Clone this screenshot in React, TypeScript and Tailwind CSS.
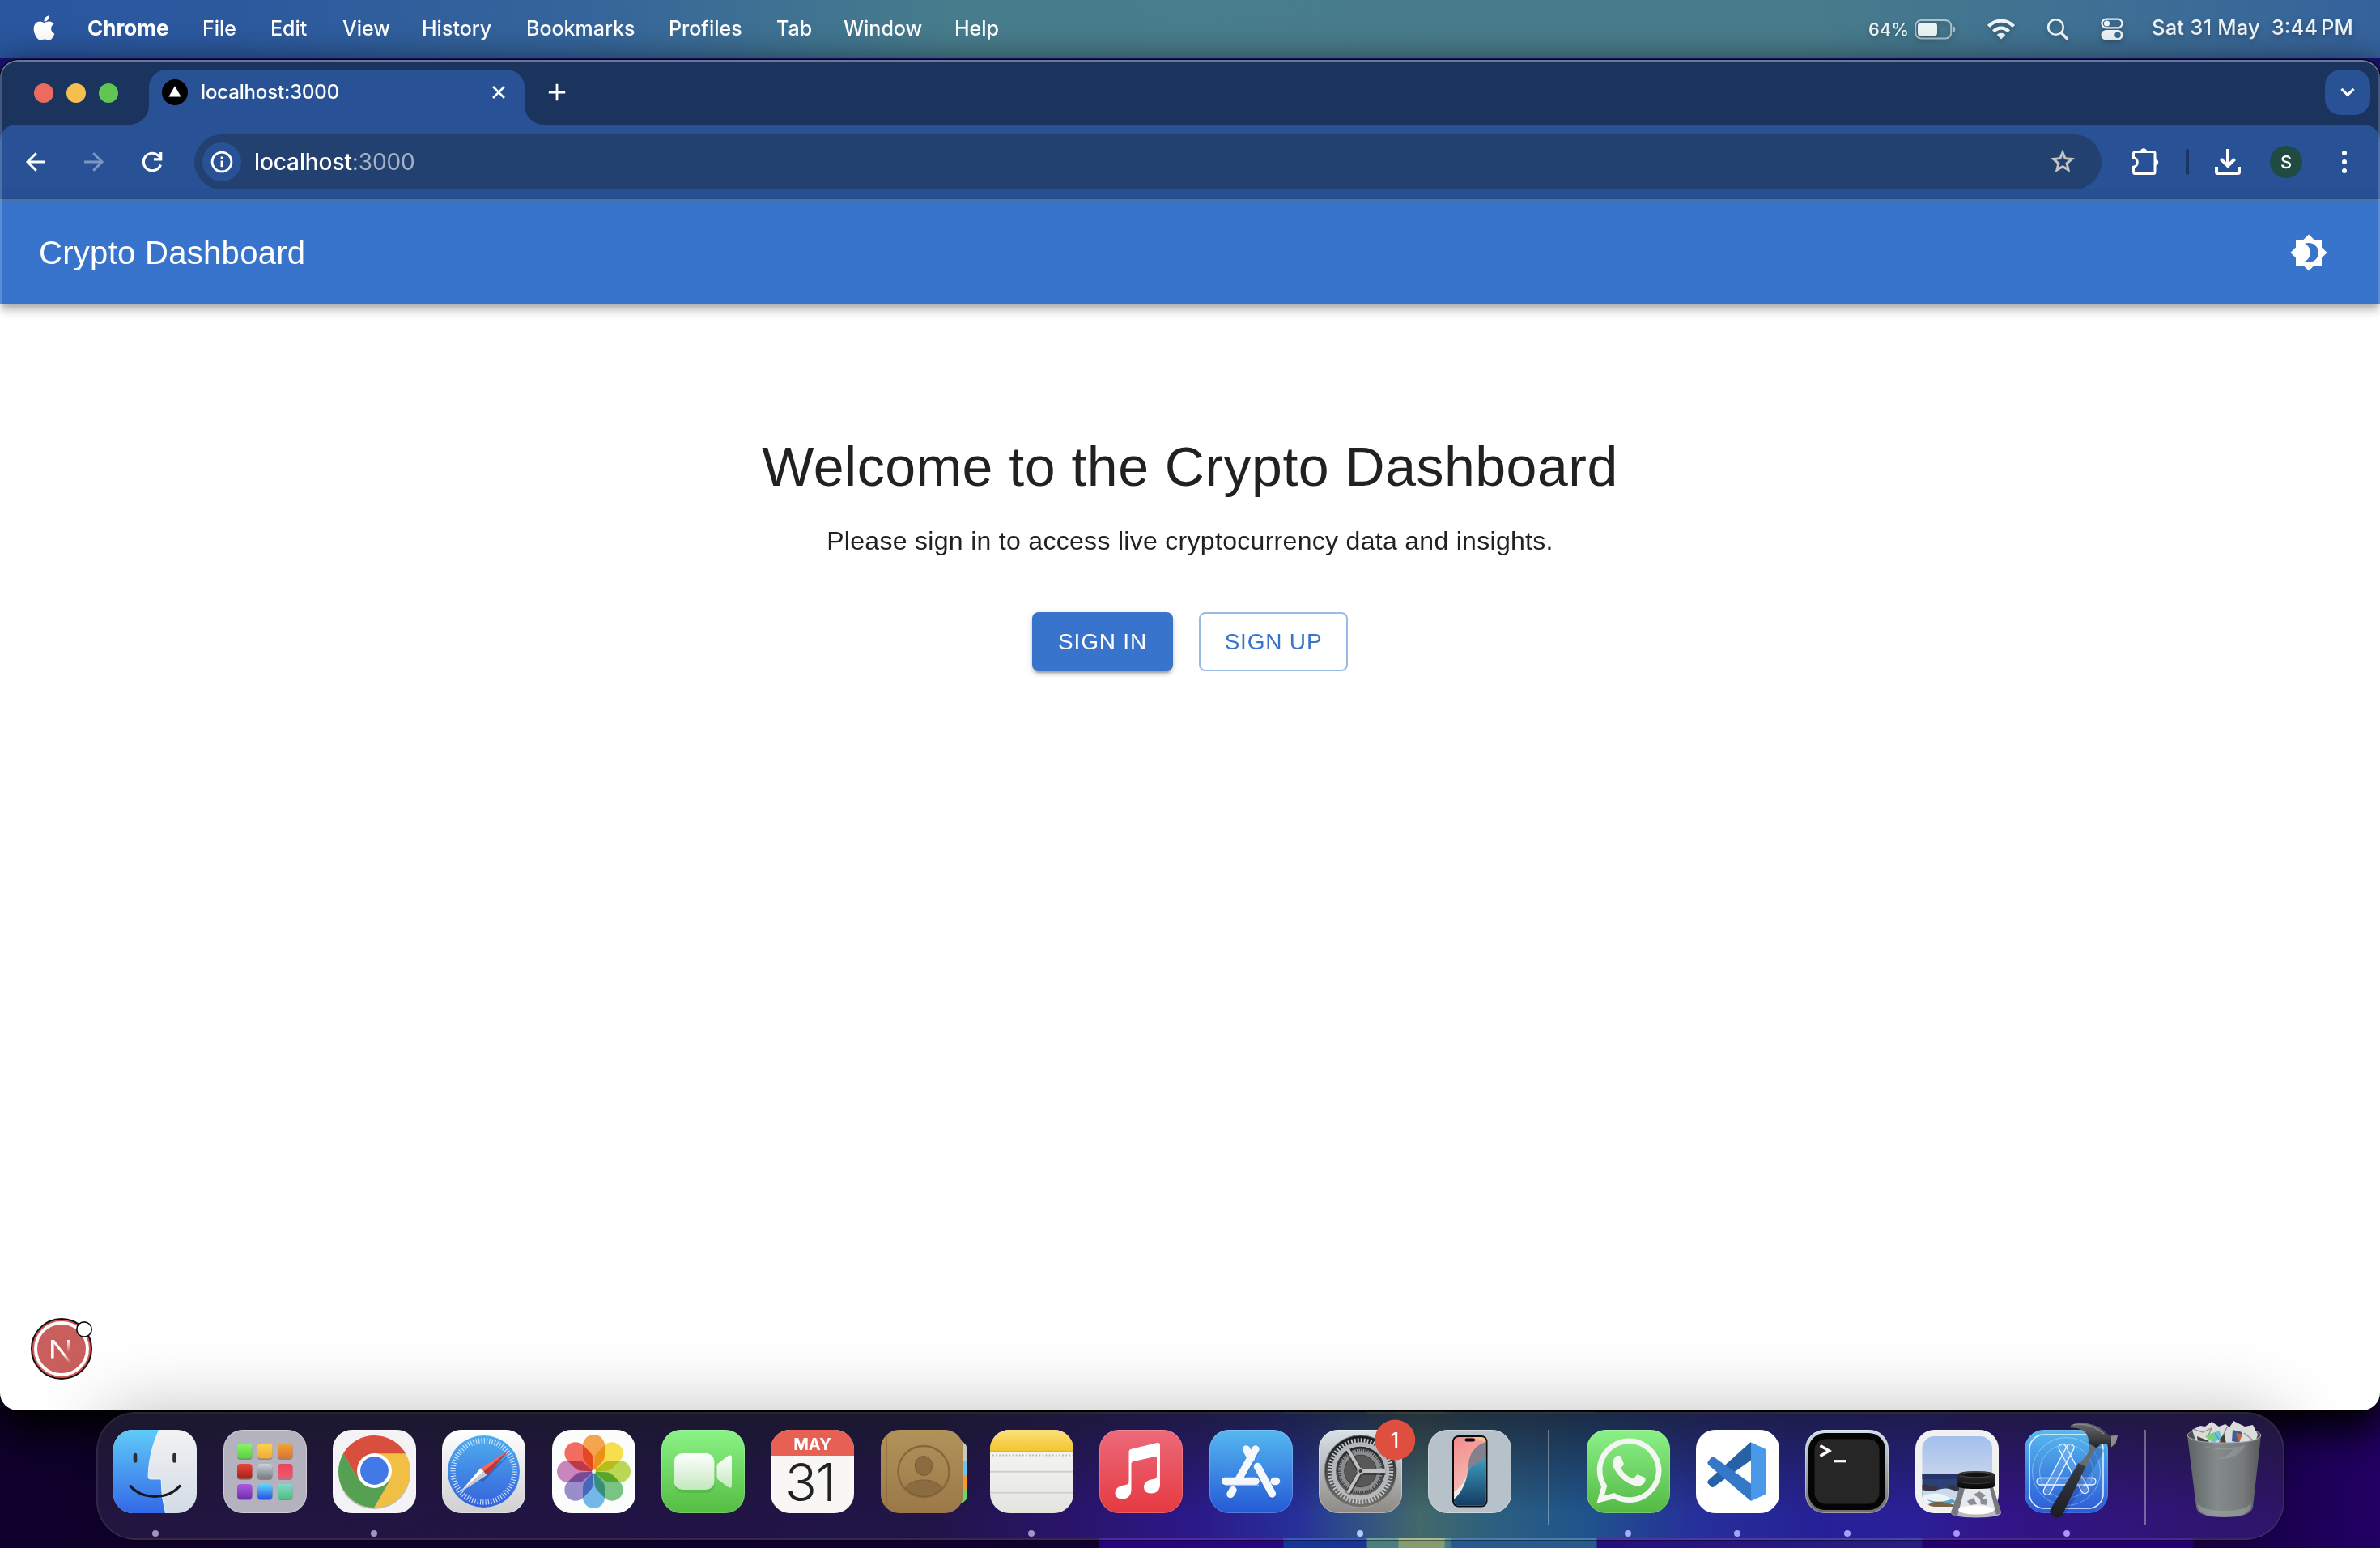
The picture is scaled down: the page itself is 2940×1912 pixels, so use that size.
import React from "react";
import { FaApple, FaWhatsapp } from "react-icons/fa";
import { MdBrightness4 } from "react-icons/md";

const menuItems = [
  { label: "Chrome", cls: "w-[142px] font-bold text-[26px]" },
  { label: "File", cls: "w-[84px]" },
  { label: "Edit", cls: "w-[89px]" },
  { label: "View", cls: "w-[98px]" },
  { label: "History", cls: "w-[129px]" },
  { label: "Bookmarks", cls: "w-[176px]" },
  { label: "Profiles", cls: "w-[133px]" },
  { label: "Tab", cls: "w-[83px]" },
  { label: "Window", cls: "w-[137px]" },
  { label: "Help", cls: "w-[80px]" },
];

function MenuBar() {
  return (
    <header className="flex h-[72px] shrink-0 items-center bg-[linear-gradient(90deg,#2a569f_0%,#2c599e_10%,#35659a_25%,#3f7292_33%,#477c8c_40%,#487d8b_50%,#487c8b_76%,#3f7094_88%,#35629c_100%)] text-[25px] font-medium text-white">
      <div className="flex w-[108px] pl-[37px]">
        <FaApple className="mt-[-4px] size-[35px]" />
      </div>
      <nav className="flex items-baseline pb-[2px]">
        {menuItems.map((m) => (
          <span key={m.label} className={"block whitespace-nowrap leading-[38px] " + m.cls}>
            {m.label}
          </span>
        ))}
      </nav>
      <div className="ml-auto flex items-center text-[#eef3f6] drop-shadow-[0_3px_3px_rgba(0,0,0,0.25)]">
        <span className="block w-[57px] whitespace-nowrap text-[22px] tracking-[0px]">64%</span>
        <svg width="54" height="26" viewBox="0 0 54 26" className="block">
          <rect x="1.2" y="2" width="44" height="22.5" rx="7" fill="none" stroke="#a9c2cb" strokeWidth="2" />
          <rect x="4" y="5" width="24" height="16.5" rx="4" fill="#eef3f6" />
          <path d="M48 9.5c3 .6 3 6.900 0 7.500z" fill="#a9c2cb" />
        </svg>
        <svg width="36" height="28" viewBox="0 0 36 28" className="ml-[35px] block" fill="none" stroke="#eef3f6" strokeWidth="4.300">
          <path d="M2.500 10.500C11 1.200 25 1.200 33.500 10.500" />
          <path d="M8.500 16.800C14 11.200 22 11.200 27.500 16.800" />
          <path d="M18 26.500l-5.300-5.600c3-2.900 7.600-2.900 10.600 0z" fill="#eef3f6" stroke="none" />
        </svg>
        <svg width="28" height="28" viewBox="0 0 28 28" className="ml-[38px] block" fill="none" stroke="#eef3f6" strokeLinecap="round">
          <circle cx="11.500" cy="11.500" r="9.300" strokeWidth="2.600" />
          <path d="M18.500 18.800l6.800 7" strokeWidth="3.400" />
        </svg>
        <svg width="28" height="28" viewBox="0 0 28 28" className="ml-[39px] block">
          <rect x="1.500" y="1.700" width="25" height="10.600" rx="5.300" fill="none" stroke="#eef3f6" strokeWidth="2.200" />
          <circle cx="7.500" cy="7" r="3.600" fill="#eef3f6" />
          <rect x="0.500" y="15" width="27" height="12.600" rx="6.300" fill="#eef3f6" />
          <circle cx="21" cy="21.300" r="3.700" fill="#3c6c90" />
        </svg>
        <span className="ml-[35px] flex w-[282px] gap-[14px] whitespace-nowrap pb-[3px] text-[25.5px]">
          <span className="tracking-[0.2px]">Sat 31 May</span>
          <span>
            3:44<span className="ml-[4px]">PM</span>
          </span>
        </span>
      </div>
    </header>
  );
}

function TabStrip() {
  return (
    <div className="flex h-[78px] items-end">
      <div className="flex h-full w-[160px] items-center gap-[16px] pl-[42px]">
        <i className="size-[24px] rounded-full bg-[#ed6a5e]" />
        <i className="size-[24px] rounded-full bg-[#f5bf4f]" />
        <i className="size-[24px] rounded-full bg-[#61c554]" />
      </div>
      <div className="size-[24px] bg-[radial-gradient(circle_at_0_0,transparent_23.5px,#285196_24.5px)]" />
      <div className="flex h-[68px] w-[464px] items-center rounded-t-[22px] bg-[#285196] pb-[12px] pl-[16px] pr-[24px]">
        <svg width="32" height="32" viewBox="0 0 32 32">
          <circle cx="16" cy="16" r="16" fill="#000" />
          <path d="M16 8.200l7.600 13.400H8.400z" fill="#fff" />
        </svg>
        <span className="ml-[16px] text-[24px] font-medium tracking-[-0.15px] text-white">localhost:3000</span>
        <svg width="16" height="16" viewBox="0 0 16 16" className="ml-auto" stroke="#fff" strokeWidth="2.600">
          <path d="M1 1l14 14M15 1L1 15" />
        </svg>
      </div>
      <div className="size-[24px] bg-[radial-gradient(circle_at_100%_0,transparent_23.5px,#285196_24.5px)]" />
      <svg width="22" height="22" viewBox="0 0 22 22" className="mb-[29px] ml-[5px]" stroke="#fff" strokeWidth="2.800">
        <path d="M11 .8v20.400M.8 11h20.400" />
      </svg>
      <div className="mb-[12px] ml-auto mr-[12px] flex size-[56px] items-center justify-center rounded-[20px] bg-[#285196]">
        <svg width="18" height="12" viewBox="0 0 18 12" fill="none" stroke="#fff" strokeWidth="3.200">
          <path d="M1.500 1.800L9 9.300l7.500-7.500" />
        </svg>
      </div>
    </div>
  );
}

function Toolbar() {
  return (
    <div className="flex h-[94px] items-center rounded-t-[20px] border-b-2 border-[#4f78a9] bg-[#285196]">
      <div className="flex w-[240px] items-center gap-[44px] pl-[30px]">
        <svg width="28" height="28" viewBox="0 0 28 28" fill="none" stroke="#fff" strokeWidth="3">
          <path d="M26 14H4M14.800 3.200L4 14l10.800 10.800" />
        </svg>
        <svg width="28" height="28" viewBox="0 0 28 28" fill="none" stroke="#7e97c1" strokeWidth="3">
          <path d="M2 14h22M13.200 3.200L24 14 13.200 24.800" />
        </svg>
        <svg width="28" height="28" viewBox="0 0 28 28" fill="none" stroke="#fff" strokeWidth="3.200">
          <path d="M24.400 17.500A10.800 10.800 0 1 1 22 6.600L25 9.600" />
          <path d="M24.700 2v8.800H16" />
        </svg>
      </div>
      <div className="flex h-[68px] w-[2356px] items-center rounded-full bg-[#234170] pl-[10px] pr-[32px]">
        <div className="flex size-[48px] items-center justify-center rounded-full bg-[#285196]">
          <svg width="28" height="28" viewBox="0 0 28 28" fill="none" stroke="#fff">
            <circle cx="14" cy="14" r="11.900" strokeWidth="2.800" />
            <path d="M14 12.500v7.700" strokeWidth="2.800" />
            <path d="M14 7.600v2.900" strokeWidth="2.800" />
          </svg>
        </div>
        <span className="ml-[16px] text-[28px] font-medium tracking-[-0.1px] text-white">
          localhost<span className="font-normal text-[#a3b0c5]">:3000</span>
        </span>
        <svg width="32" height="32" viewBox="0 0 32 32" className="ml-auto" fill="none" stroke="#c4c4c2" strokeWidth="3">
          <path d="M16 4.200l3.100 7.500 8.300.7-6.300 5.500 1.900 8L16 21.700l-7 4.200 1.900-8-6.300-5.500 8.300-.7z" />
        </svg>
      </div>
      <svg width="36" height="36" viewBox="0 0 36 36" className="ml-[36px]">
        <path
          d="M3.500 7.500a2 2 0 0 1 2-2h22.500a2 2 0 0 1 2 2v23a2 2 0 0 1-2 2H5.500a2 2 0 0 1-2-2v-6.200a5.900 5.900 0 0 0 0-11.600z"
          fill="none"
          stroke="#fff"
          strokeWidth="3"
        />
        <path d="M11.800 5.500a4.200 4.200 0 0 1 8.400 0zM30 14.200a4.300 4.300 0 0 1 0 8.600z" fill="#fff" />
      </svg>
      <i className="ml-[32px] h-[32px] w-[4px] rounded-full bg-[#1b3560]" />
      <svg width="32" height="32" viewBox="0 0 32 32" className="ml-[32px]" fill="none" stroke="#fff" strokeWidth="4">
        <path d="M16 0v21M7.500 12.500L16 21l8.500-8.500" />
        <path d="M2 22v6.500a1.500 1.500 0 0 0 1.500 1.500h25a1.500 1.500 0 0 0 1.500-1.500V22" />
      </svg>
      <div className="ml-[36px] flex size-[40px] items-center justify-center rounded-full bg-[#204b41] text-[22px] font-medium text-white">
        S
      </div>
      <div className="ml-[49px] flex flex-col gap-[5px]">
        <i className="size-[6px] rounded-full bg-white" />
        <i className="size-[6px] rounded-full bg-white" />
        <i className="size-[6px] rounded-full bg-white" />
      </div>
    </div>
  );
}

function Page() {
  return (
    <div className="relative flex h-[1494px] flex-col bg-white font-['Liberation_Sans',Arial,sans-serif]">
      <div className="flex h-[128px] shrink-0 items-center justify-between bg-[#3874cb] pl-[48px] pr-[64px] text-white shadow-[0_4px_8px_-2px_rgba(0,0,0,0.2),0_8px_10px_0_rgba(0,0,0,0.14),0_2px_20px_0_rgba(0,0,0,0.12)]">
        <h1 className="text-[40px] leading-[64px] tracking-[0.3px]">Crypto Dashboard</h1>
        <MdBrightness4 className="size-[48px]" />
      </div>
      <main className="flex flex-col items-center pt-[158px] text-[#212121]">
        <h2 className="text-[68px] leading-[84px] tracking-[0.5px]">Welcome to the Crypto Dashboard</h2>
        <p className="mt-[26px] text-[32px] leading-[48px] tracking-[0.3px]">
          Please sign in to access live cryptocurrency data and insights.
        </p>
        <div className="mt-[64px] flex gap-[32px] text-[28px] tracking-[0.8px]">
          <button className="flex h-[73px] w-[174px] items-center justify-center rounded-[8px] bg-[#3874cb] text-white shadow-[0_6px_2px_-4px_rgba(0,0,0,0.2),0_4px_4px_0_rgba(0,0,0,0.14),0_2px_10px_0_rgba(0,0,0,0.12)]">
            SIGN IN
          </button>
          <button className="flex h-[73px] w-[184px] items-center justify-center rounded-[8px] border-2 border-[#9bb9e5] text-[#3874cb]">
            SIGN UP
          </button>
        </div>
      </main>
      <div className="absolute bottom-[38px] left-[38px] size-[76px]">
        <svg width="76" height="76" viewBox="0 0 76 76" className="overflow-visible">
          <defs>
            <linearGradient id="nx1" x1="0" y1="0" x2="0" y2="1">
              <stop offset="0.1" stopColor="#fff" stopOpacity="0.9" />
              <stop offset="1" stopColor="#fff" stopOpacity="0" />
            </linearGradient>
            <linearGradient id="nx2" gradientUnits="userSpaceOnUse" x1="41" y1="44" x2="49" y2="55">
              <stop offset="0" stopColor="#fff" />
              <stop offset="1" stopColor="#fff" stopOpacity="0" />
            </linearGradient>
          </defs>
          <circle cx="38" cy="38" r="37" fill="#d65555" stroke="#111" strokeWidth="2" />
          <circle cx="38" cy="38" r="32" fill="#c95f5d" stroke="#fff" strokeWidth="4" />
          <path d="M25 49.500V27h3.600v22.500z" fill="#fff" />
          <path d="M25 27h4L49.500 53.500l-2.400 1.700z" fill="url(#nx2)" />
          <rect x="45" y="27" width="3.600" height="15" fill="url(#nx1)" />
          <circle cx="66" cy="14" r="9.200" fill="#fff" stroke="#111" strokeWidth="1.700" />
        </svg>
      </div>
    </div>
  );
}

function BrowserWindow() {
  return (
    <section className="relative mt-[2px] h-[1668px] overflow-hidden rounded-[22px] bg-[#1a345e] pt-[2px] shadow-[0_0_0_1px_#000,0_20px_50px_6px_#000]">
      <TabStrip />
      <Toolbar />
      <Page />
      <div className="pointer-events-none absolute inset-0 rounded-[22px] shadow-[inset_0_2px_0_0_rgba(255,255,255,0.2),inset_0_0_0_2px_rgba(255,255,255,0.18)]" />
    </section>
  );
}

function Grad({ id, a, b, x2 = 0 }: { id: string; a: string; b: string; x2?: number }) {
  return (
    <linearGradient id={id} x1="0" y1="0" x2={x2} y2="1">
      <stop offset="0" stopColor={a} />
      <stop offset="1" stopColor={b} />
    </linearGradient>
  );
}

const Plate = ({ fill, edge = 0.35 }: { fill: string; edge?: number }) => (
  <>
    <rect width="103" height="103" rx="24" fill={fill} />
    <rect x="0.500" y="0.500" width="102" height="102" rx="23.500" fill="none" stroke="#fff" strokeOpacity={edge} />
  </>
);

function Finder() {
  return (
    <g clipPath="url(#plate)">
      <Grad id="fi1" a="#f2f2f3" b="#d2dbe6" />
      <Grad id="fi2" a="#5fcbf8" b="#3368e8" />
      <rect width="103" height="103" fill="url(#fi1)" />
      <path d="M0 0h56.500C48 18 43.500 38 43 58q0 3 3 3h13q0 22 5.500 42H0z" fill="url(#fi2)" />
      <path d="M56.500 0C48 18 43.500 38 43 58q0 3 3 3h13q0 22 5.500 42" fill="none" stroke="#fff" strokeOpacity=".7" />
      <path d="M27 31v7.500M75.500 31v7.500" stroke="#2b2d33" strokeWidth="4.600" strokeLinecap="round" />
      <path d="M21 69.500c15 17 46 17 61 0" fill="none" stroke="#16181d" strokeWidth="3.400" strokeLinecap="round" />
    </g>
  );
}

const pads = [
  ["#8df36a", "#56d13c"], ["#f9d64a", "#f1a83a"], ["#efa43a", "#df7330"],
  ["#e8473a", "#a81f17"], ["#c5d3da", "#757a7c"], ["#ea4460", "#ee5a6b"],
  ["#b05ae0", "#6f2fae"], ["#5fd8fa", "#2a52e0"], ["#7fdcc8", "#52bd82"],
];

function Launchpad() {
  return (
    <g>
      <Plate fill="#b5b2bf" />
      {pads.map(([a, b], i) => (
        <g key={i}>
          <Grad id={"lp" + i} a={a} b={b} />
          <rect x={17 + (i % 3) * 25} y={18 + Math.floor(i / 3) * 25} width="18.500" height="19" rx="4" fill="#000" opacity=".25" />
          <rect x={17 + (i % 3) * 25} y={17 + Math.floor(i / 3) * 25} width="18.500" height="18.500" rx="4" fill={`url(#lp${i})`} />
        </g>
      ))}
    </g>
  );
}

function ChromeIcon() {
  return (
    <g>
      <Plate fill="#f3f3f5" />
      <circle cx="51.500" cy="53.500" r="44.500" fill="#7a7045" opacity=".4" />
      <g transform="translate(51.500 51.500)">
        <path d="M-38.500-22.300A44.500 44.500 0 0 1 38.700-22L0-22-19 11z" fill="#d84f3d" />
        <path d="M38.700-22A44.500 44.500 0 0 1-.3 44.500L19 11 0-22z" fill="#f2bf45" />
        <path d="M-.3 44.500A44.500 44.500 0 0 1-38.500-22.300L-19 11 19 11z" fill="#55a052" />
        <circle cy="-1" r="21.500" fill="#fff" />
        <circle cy="-1" r="17.400" fill="#4379e6" />
      </g>
    </g>
  );
}

function Safari() {
  return (
    <g>
      <Grad id="sa0" a="#ffffff" b="#cfcfd1" />
      <Grad id="sa1" a="#4faeee" b="#3461dc" />
      <Plate fill="url(#sa0)" />
      <circle cx="51.500" cy="51.500" r="44.500" fill="url(#sa1)" />
      <circle cx="51.500" cy="51.500" r="38" fill="none" stroke="#e6f1ff" strokeWidth="6.500" strokeDasharray="1.100 2.216" opacity=".9" />
      <path d="M83.500 26L50 60l-8-2z" fill="#17357c" opacity=".35" transform="translate(1 4)" />
      <path d="M82.500 25.500L47.500 47.500l4 4z" fill="#f06a5e" />
      <path d="M82.500 25.500L55.500 56l-4-4.500z" fill="#c9332c" />
      <path d="M21.500 78l26-30.500 4 4z" fill="#fff" />
      <path d="M21.500 78L55.500 56l-4-4.500z" fill="#c9ccd2" />
    </g>
  );
}

const petals = ["#f3a043", "#f6dd45", "#b7d64b", "#72c07c", "#6ab4e8", "#9587c9", "#c57fb8", "#f16457"];

function Photos() {
  return (
    <g>
      <Plate fill="#fbfcfc" />
      <g transform="translate(51.500 51.500)" className="isolate">
        {petals.map((c, i) => (
          <path
            key={c}
            d="M0 0L-11.500-13Q-13.500-16-13.500-20v-12a13.500 13.500 0 0 1 27 0v12q0 4-2 7z"
            transform={`rotate(${i * 45})`}
            fill={c}
            fillOpacity=".95"
            className="mix-blend-multiply"
          />
        ))}
      </g>
      <circle cx="51.500" cy="51.500" r="2.500" fill="#fff" opacity=".85" />
    </g>
  );
}

function FaceTime() {
  return (
    <g>
      <Grad id="ft0" a="#8af386" b="#55bd42" />
      <Grad id="ft1" a="#ffffff" b="#c4e8bd" />
      <Plate fill="url(#ft0)" edge={0.2} />
      <rect x="16" y="32" width="50" height="46" rx="11" fill="#2f8f26" opacity=".25" />
      <rect x="15.500" y="29" width="50" height="45" rx="10.500" fill="url(#ft1)" />
      <path d="M68.500 45q0-2 1.500-3.500l12-9q5-3 5 2v34q0 5-5 2l-12-9q-1.500-1.500-1.500-3.500z" fill="url(#ft1)" />
    </g>
  );
}

function Calendar() {
  return (
    <g>
      <g clipPath="url(#plate)">
        <rect width="103" height="103" fill="#f8f7f5" />
        <rect width="103" height="32" fill="#e66053" />
      </g>
      <text x="51.500" y="24.800" textAnchor="middle" fontSize="20" fontWeight="700" fill="#fff">MAY</text>
      <text x="49" y="88" textAnchor="middle" fontSize="64" fontWeight="300" fill="#222" letterSpacing="-1">31</text>
    </g>
  );
}

function Contacts() {
  return (
    <g>
      <Grad id="co" a="#b1935a" b="#9c7848" />
      <path d="M98 14q9 2 9 12v14h-9z" fill="#c9c7c2" />
      <path d="M98 38h9v18h-9z" fill="#6fc3f2" />
      <path d="M98 56h9v18h-9z" fill="#f29a35" />
      <path d="M98 74h9v6q0 9-9 11z" fill="#6bd76a" />
      <rect width="102" height="103" rx="23" fill="url(#co)" />
      <path d="M7 8v87" stroke="#7a5c33" strokeOpacity=".6" strokeWidth="1.500" />
      <circle cx="53" cy="51.500" r="31.500" fill="none" stroke="#86663b" strokeWidth="2.400" />
      <ellipse cx="53" cy="44.500" rx="10.800" ry="12" fill="#8b6b40" stroke="#7b5c34" />
      <path d="M30.500 71c9-12 36-12 45 0-10 15-35 15-45 0z" fill="#8b6b40" stroke="#7b5c34" />
    </g>
  );
}

function Notes() {
  return (
    <g clipPath="url(#plate)">
      <Grad id="no0" a="#f9e17a" b="#f4c52f" />
      <Grad id="no1" a="#f9f9f8" b="#e4e4df" />
      <rect width="103" height="103" fill="url(#no1)" />
      <rect width="103" height="26" fill="url(#no0)" />
      <path d="M0 27h103" stroke="#a09a88" strokeWidth="1.600" />
      <path d="M3 31.500h100" stroke="#b9b9ba" strokeWidth="1.800" strokeDasharray="1.800 2.300" />
      <path d="M0 51.800h103M0 77.800h103" stroke="#cfcfd2" strokeWidth="2" />
    </g>
  );
}

function Music() {
  return (
    <g>
      <Grad id="mu" a="#ec6a7b" b="#e63940" />
      <Plate fill="url(#mu)" edge={0.2} />
      <path
        d="M36.500 27.500q0-3 3-3.700l32-7.700q3.500-.7 3.500 2.400V67c0 7.500-4 11.500-11 11.500-5.500 0-9-3-9-7.500 0-5 3.500-8.500 9-9.500l4-.8q3-.7 3-4V34.500q0-2-2-1.600l-27.500 6.300q-2 .5-2 2.500V74c0 7-4.500 11.500-11 11.500-5.500 0-9-3-9-7.500s3.500-8 8.500-9l5.500-1.200q3-.7 3-4z"
        fill="#fff"
      />
    </g>
  );
}

function AppStore() {
  return (
    <g>
      <Grad id="as" a="#55b8f0" b="#2559d6" />
      <Plate fill="url(#as)" edge={0.2} />
      <g stroke="#123a9a" strokeOpacity=".3" strokeWidth="9.500" strokeLinecap="round" fill="none" transform="translate(0 2)">
        <path d="M57 24L36 62M60 45l17.500 34M19.500 63.500h37" />
      </g>
      <g stroke="#f4f8fc" strokeWidth="9.400" fill="none" strokeLinecap="round">
        <path d="M45.500 24l6 11" />
        <path d="M19.500 63.500H57M80 63.500h2.500" />
        <path d="M57 24L36.500 60.500" />
        <path d="M59.500 45.500L77.500 79" />
        <path d="M29 74.500l-3 5" />
      </g>
      <path d="M19.500 68.200H61" stroke="#b8d2ee" strokeWidth="1" />
    </g>
  );
}

function Settings() {
  return (
    <g>
      <Grad id="se0" a="#d9e2e9" b="#8d8985" />
      <Grad id="se1" a="#15191b" b="#77736e" />
      <Plate fill="url(#se0)" />
      <circle cx="51.500" cy="51.500" r="45" fill="url(#se1)" />
      <circle cx="51.500" cy="51.500" r="44.600" fill="none" stroke="#d6d8da" strokeOpacity=".5" />
      <g transform="translate(51.500 51)" fill="none">
        <circle r="37.500" stroke="#c3c7ca" strokeWidth="6.500" strokeDasharray="1.900 2.026" />
        <circle r="33" stroke="#b4b8bb" strokeWidth="5.500" />
        <circle r="28" fill="#3b3b3b" />
        <circle r="25.500" stroke="#94979a" strokeWidth="3.500" strokeDasharray="1.300 1.370" />
        <circle r="22.500" stroke="#8a8d8f" strokeWidth="4.500" />
        <circle r="19.500" fill="#5a5857" />
        <g stroke="#2c2c2c" strokeOpacity=".6" strokeWidth="7">
          <path d="M0 1.500h31M0 1L-15.500-26M0 1L-15.500 28" />
        </g>
        <g stroke="#bfc3c6" strokeWidth="4">
          <path d="M0 0h31M0 0L-15.500-27M0 0L-15.500 27" />
        </g>
        <circle r="4.200" fill="#b4b8bb" />
        <circle r="2" fill="#333" />
      </g>
      <circle cx="94.300" cy="12.500" r="25" fill="#de4f40" />
      <text x="94" y="21.500" textAnchor="middle" fontSize="25" fontWeight="500" fill="#fff">1</text>
    </g>
  );
}

function Phone() {
  return (
    <g>
      <Grad id="ph0" a="#f28d8c" b="#f7c4bd" x2={0.3} />
      <Grad id="ph1" a="#3f9fc4" b="#123a5e" />
      <Plate fill="#b6c1c9" />
      <clipPath id="phc">
        <rect x="32" y="9" width="39.500" height="84.500" rx="5.500" />
      </clipPath>
      <rect x="30" y="7" width="43.500" height="88.500" rx="7.500" fill="#0a0c0e" />
      <g clipPath="url(#phc)">
        <rect x="32" y="9" width="40" height="85" fill="url(#ph0)" />
        <path d="M50 45C50 28 60 18 72 15V60H50z" fill="#84818f" />
        <path d="M54 9h18v6q-10-3-18-6z" fill="#f3c58f" />
        <path d="M32 77c9-6 17-17 18-30l3 8-10 32-11 5z" fill="#f3e9e8" />
        <path d="M32 86c9-8 15-20 17-34 3-8 15-10 23-19v62H32z" fill="url(#ph1)" />
      </g>
      <rect x="45.500" y="10.500" width="12.500" height="4" rx="2" fill="#000" />
    </g>
  );
}

function WhatsApp() {
  return (
    <g>
      <Grad id="wa" a="#8bf187" b="#54b944" />
      <Plate fill="url(#wa)" edge={0.2} />
      <FaWhatsapp x={6.700} y={4.900} size={91.500} color="#f4f6f4" />
    </g>
  );
}

function VSCode() {
  return (
    <g>
      <Plate fill="#fff" />
      <path d="M66 16.500q1-1 2-1v22L22 70.500q-1.500 1-3 0l-4-4q-1.500-2 0-4z" fill="#2762a6" />
      <path d="M68 87.500q-1 0-2.500-1.500L15 43q-1.500-2.500 0-4l4-5q1.500-1.500 3.500-.3L68 66.500z" fill="#3578c8" />
      <path d="M68 15.500l17 7.700q2 1 2 3.500v50q0 2.500-2 3.500L68 88z" fill="#4a99e9" />
    </g>
  );
}

function Terminal() {
  return (
    <g>
      <Grad id="te" a="#cfe0ea" b="#6f6b6d" />
      <Plate fill="url(#te)" />
      <rect x="4" y="4" width="95" height="95" rx="20.500" fill="#050505" />
      <rect x="11.500" y="11.500" width="80" height="80" rx="13.500" fill="#262626" />
      <path d="M18.500 19.500L29.500 26l-11 6.500" fill="none" stroke="#fff" strokeWidth="3.600" />
      <path d="M35 38.700h15" stroke="#fff" strokeWidth="3.200" />
    </g>
  );
}

function Preview() {
  return (
    <g>
      <Grad id="pr0" a="#a3c0ee" b="#c6d3ec" />
      <Grad id="pr1" a="#3a3a3c" b="#050505" />
      <Plate fill="#f1f1f2" />
      <clipPath id="prc">
        <rect x="8.500" y="8" width="86.500" height="87" rx="15" />
      </clipPath>
      <g clipPath="url(#prc)">
        <rect x="8" y="8" width="88" height="48" fill="url(#pr0)" />
        <rect x="8" y="55" width="88" height="40" fill="#2c4277" />
        <rect x="8" y="55" width="88" height="6" fill="#26346a" />
        <path d="M8 72q14 5 20 2 12-4 22 2l14 2v18H8z" fill="#c9dbe8" />
        <path d="M8 82q20-8 34 2 10 2 18 0v12H8z" fill="#eef5f8" />
        <path d="M14 86q16 6 32-1l6 6H22z" fill="#5aa3bd" />
        <path d="M8 68q8-2 12 2 8-1 9 3-10 4-21 1zM38 70q8-4 14 0l4 4q-10 2-18-4z" fill="#3b3340" />
        <path d="M16 92q12-6 24-1 8 0 10 5H20z" fill="#7a6247" />
      </g>
      <path d="M55 71h41l10 31q1 6-31 6.500-32-.5-31-6.500z" fill="#b7babf" />
      <path d="M60 73h32l7 26q-24 6-48 0z" fill="#e6e9ed" />
      <path d="M55 71L44 102q2 4 8 4.500L61 72zM92 72l8 33q5-1 6-3L96 71z" fill="#75787d" />
      <path d="M72 80l7-4 8 5-6 5zM64 88l8-4 4 8-9 1zM80 86l8-1 1 8-8-1z" fill="#898e98" />
      <ellipse cx="75" cy="99" rx="22" ry="5.500" fill="#fff" />
      <path d="M52 56q0-5 23-5t23.500 5v13q-1 4-23.500 4T52 69z" fill="url(#pr1)" />
      <ellipse cx="75.200" cy="55.500" rx="19" ry="3.300" fill="#111" stroke="#555" strokeWidth=".8" />
      <path d="M52.500 64q22 5 45.500 0" fill="none" stroke="#3d3d3f" strokeWidth="1" />
    </g>
  );
}

function Xcode() {
  return (
    <g>
      <Grad id="xc0" a="#55b9ee" b="#2c5bd6" />
      <Grad id="xc1" a="#3a3c44" b="#1b1c22" />
      <Grad id="xc2" a="#6d6d70" b="#202124" />
      <Plate fill="url(#xc0)" edge={0.1} />
      <rect x="6" y="6" width="91" height="91" rx="18" fill="none" stroke="#fff" strokeOpacity=".9" strokeWidth="1.500" />
      <g fill="none" stroke="#fff" strokeOpacity=".35" strokeWidth="1">
        <circle cx="51.500" cy="51.500" r="42" />
        <circle cx="51.500" cy="51.500" r="33" />
      </g>
      <g fill="#8fc0f2" fillOpacity=".25" stroke="#f1f8ff" strokeWidth="1.300">
        <rect x="-4.500" y="0" width="9" height="68" rx="4.500" transform="translate(44.500 18) rotate(-28)" />
        <rect x="-4.500" y="0" width="9" height="70" rx="4.500" transform="translate(58.500 18) rotate(28)" />
        <rect x="15" y="59.500" width="73" height="8.500" rx="4.200" />
      </g>
      <path d="M85 20l14 5-52 84-13-8z" fill="#0d1f6a" opacity=".25" />
      <path d="M78 14q5 8-1 17L65 45l8 4 12-22q4-7 10-7z" fill="#6a6b6f" />
      <path d="M66.500 41l9 4.500L46.500 105q-3 6-10 3t-4.500-10z" fill="url(#xc1)" />
      <path
        d="M57-5.500q8-4.500 20-2.500 17 3 26 14l3 1.500 9-.5-3 12-5 4-5.500-5.500-4-.5q-4 0-9 6-4-4-9-6 0-13-10-17.500-5-2.500-12.500-2z"
        fill="url(#xc2)"
      />
      <path d="M60-6q20-4 38 11" fill="none" stroke="#8a8a8e" strokeWidth="1.400" />
      <path d="M107 7.500l8-.5-2.500 9.500-5.500 5z" fill="#8d8e92" />
    </g>
  );
}

function Trash() {
  return (
    <g>
      <linearGradient id="tr" x1="0" x2="1" y1="0" y2="0">
        <stop offset="0" stopColor="#5d6264" />
        <stop offset=".4" stopColor="#858a8b" />
        <stop offset=".75" stopColor="#777b7c" />
        <stop offset="1" stopColor="#55595b" />
      </linearGradient>
      <ellipse cx="51.500" cy="6.500" rx="45.500" ry="9" fill="#4d5155" stroke="#8b9093" />
      <path d="M12 0l10-5 6 1 8-6 9 6 8-3 5 4 5-8 14 7 10-2 6 12-4 11-30 6-34-2-9-8z" fill="#dcdcda" />
      <path d="M34 5l12-4 2 10-10 5z" fill="#5fc4dc" />
      <path d="M28 8l14-5-6 12z" fill="#7bd36a" />
      <path d="M62 0l12 3-4 13-9-2z" fill="#3a5f9e" />
      <path d="M66 4l9 2-6 9z" fill="#c8643b" />
      <path d="M18 8l15 6-4 4-10-3zM46 12l6-8 2 14h-9z" fill="#48403f" />
      <path d="M13-1l12 4 11-5-4 9M76 4l10 8M55-3l-5 10M40 4l8 12" fill="none" stroke="#8d8d8d" strokeWidth="1.300" />
      <path d="M6 7q3 9 45.500 9T97 7l-10 88q-2 13-35.500 13T17 95z" fill="url(#tr)" />
      <path d="M18 90q6 10 33.500 10T85 90l-.6 5q-3 12.500-33 12.500T19 95z" fill="#a2a7a8" opacity=".5" />
      <path d="M24 20q26 6 54-1-9 18-36 17 18-4 20-12-20 2-38-4z" fill="#b3b7b8" opacity=".3" />
      <path d="M6 7q3 9 45.500 9T97 7" fill="none" stroke="#a5a9ab" strokeWidth="1" />
    </g>
  );
}

type DockApp = { name: string; icon: () => React.JSX.Element; dot?: string };

const mainApps: DockApp[] = [
  { name: "Finder", icon: Finder, dot: "bg-[#a492c6]" },
  { name: "Launchpad", icon: Launchpad },
  { name: "Chrome", icon: ChromeIcon, dot: "bg-[#a492c6]" },
  { name: "Safari", icon: Safari },
  { name: "Photos", icon: Photos },
  { name: "FaceTime", icon: FaceTime },
  { name: "Calendar", icon: Calendar },
  { name: "Contacts", icon: Contacts },
  { name: "Notes", icon: Notes, dot: "bg-[#a492cc]" },
  { name: "Music", icon: Music },
  { name: "App Store", icon: AppStore },
  { name: "Settings", icon: Settings, dot: "bg-[#abcfff]" },
  { name: "Phone", icon: Phone },
];

const recentApps: DockApp[] = [
  { name: "WhatsApp", icon: WhatsApp, dot: "bg-[#a3b0ff]" },
  { name: "VS Code", icon: VSCode, dot: "bg-[#a5a2ff]" },
  { name: "Terminal", icon: Terminal, dot: "bg-[#a5a2ff]" },
  { name: "Preview", icon: Preview, dot: "bg-[#ab92ff]" },
  { name: "Xcode", icon: Xcode, dot: "bg-[#b092ff]" },
];

function DockItem({ app }: { app: DockApp }) {
  const Icon = app.icon;
  return (
    <div className="flex w-[135.35px] shrink-0 flex-col items-center" aria-label={app.name}>
      <svg width="135" height="140" viewBox="-16 -18 135 140" className="block overflow-visible font-['Inter',sans-serif]">
        <Icon />
      </svg>
      {app.dot && <i className={"mt-[2px] size-[8px] rounded-full " + app.dot} />}
    </div>
  );
}

const DockRule = () => <i className="mx-[29px] mt-[18px] h-[118px] w-[2px] shrink-0 bg-white/35" />;

function Dock() {
  return (
    <div className="ml-[119px] flex h-[158px] w-[2703px] rounded-[48px] border-2 border-white/15 bg-[linear-gradient(180deg,rgba(24,26,38,0.68)_0%,rgba(24,24,40,0.25)_50%,rgba(24,24,40,0)_80%),linear-gradient(90deg,#22153f_0%,#211447_38%,#291468_44%,#2c1888_50%,#26309a_55%,#2c4a8c_57%,#42696b_60.500%,#2b5f80_64%,#20548c_68%,#26309a_73%,#262096_79%,#2a2098_83%,#321488_87%,#31157c_92%,#2f1468_100%)] bg-clip-padding pl-[3px] pt-[2px] shadow-[0_0_0_1px_rgba(0,0,0,0.4),0_0_90px_0_rgba(0,0,0,0.26)]">
      {mainApps.map((a) => (
        <DockItem key={a.name} app={a} />
      ))}
      <DockRule />
      {recentApps.map((a) => (
        <DockItem key={a.name} app={a} />
      ))}
      <DockRule />
      <DockItem app={{ name: "Trash", icon: Trash }} />
    </div>
  );
}

export default function App() {
  return (
    <div className="flex h-[1912px] w-[2940px] flex-col overflow-hidden bg-[linear-gradient(180deg,#1a1478_0px,#1a1478_110px,transparent_111px),linear-gradient(90deg,#10002c_0px,#14003a_1357px,#2b048e_1358px,#2d0a90_1585px,#1c3cab_1586px,#1c3cab_1688px,#549090_1689px,#549090_1727px,#98b080_1728px,#98b080_1784px,#549090_1785px,#3f86a0_1792px,#2c66a0_1794px,#2c66a0_1972px,#2a1290_1973px,#2c2496_2372px,#2a0080_2376px,#2a0080_2708px,#180048_2711px,#220064_2940px)] font-['Inter',sans-serif]">
      <svg width="0" height="0" className="absolute">
        <clipPath id="plate">
          <rect width="103" height="103" rx="24" />
        </clipPath>
      </svg>
      <MenuBar />
      <BrowserWindow />
      <div className="relative mt-[2px]">
        <Dock />
      </div>
    </div>
  );
}
